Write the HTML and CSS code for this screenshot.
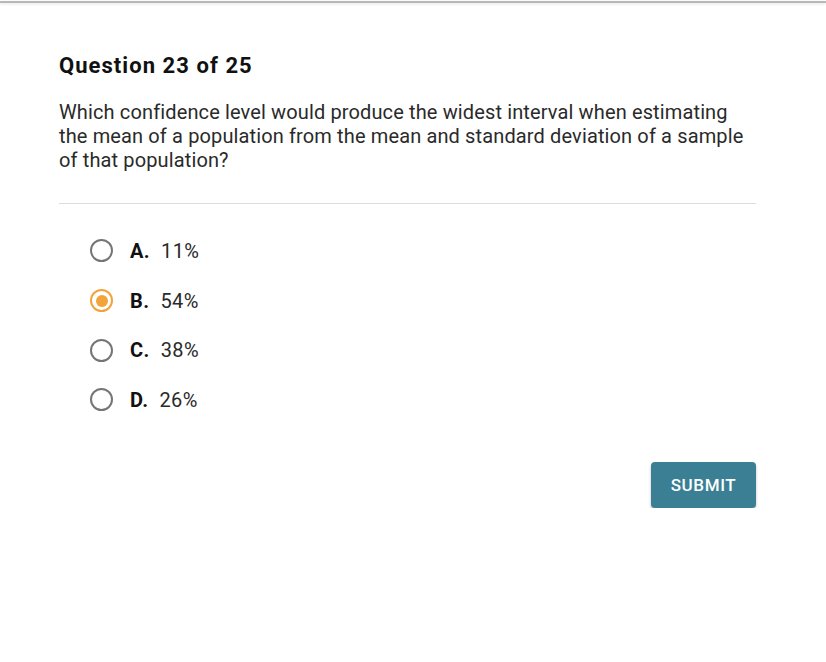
FILE: index.html
```html
<!DOCTYPE html>
<html>
<head>
<meta charset="utf-8">
<link rel="stylesheet" href="styles.css">
</head>
<body>
<div class="topbar"></div>
<main class="quiz">
  <h1 class="title">Question 23 of 25</h1>
  <p class="prompt">Which confidence level would produce the widest interval when estimating the mean of a population from the mean and standard deviation of a sample of that population?</p>
  <hr class="divider">
  <ul class="options">
    <li class="option"><span class="radio"></span><span class="letter">A.</span><span class="value">11%</span></li>
    <li class="option selected"><span class="radio"></span><span class="letter">B.</span><span class="value">54%</span></li>
    <li class="option"><span class="radio"></span><span class="letter">C.</span><span class="value">38%</span></li>
    <li class="option"><span class="radio"></span><span class="letter">D.</span><span class="value">26%</span></li>
  </ul>
  <div class="actions"><button class="submit">SUBMIT</button></div>
</main>
</body>
</html>
```
FILE: styles.css
```css
html, body {
  margin: 0;
  padding: 0;
  background: #fff;
  font-family: Roboto, "Liberation Sans", sans-serif;
  color: #1f1f1f;
}
.topbar {
  height: 2px;
  margin-top: 1px;
  background: #b8b8b8;
  box-shadow: 0 1px 3px rgba(0,0,0,0.12);
}
.quiz {
  width: 697px;
  margin-left: 59px;
  padding-top: 51px;
}
.title {
  margin: 0;
  font-size: 22px;
  line-height: 24px;
  font-weight: 700;
  color: #111;
  letter-spacing: 1.05px;
}
.prompt {
  margin: 22px 0 0;
  font-size: 20px;
  line-height: 24px;
  letter-spacing: 0.13px;
  color: #2a2a2a;
}
.divider {
  margin: 31px 0 0;
  border: 0;
  border-top: 1px solid #dcdcdc;
  height: 0;
}
.options {
  list-style: none;
  margin: 22px 0 0;
  padding: 0 0 0 31px;
}
.option {
  display: flex;
  align-items: center;
  height: 49.7px;
  font-size: 20px;
  letter-spacing: 0.4px;
}
.radio {
  box-sizing: border-box;
  width: 23px;
  height: 23px;
  border: 2px solid #757575;
  border-radius: 50%;
  display: flex;
  align-items: center;
  justify-content: center;
  margin-right: 17px;
}
.selected .radio {
  border-color: #f2a33a;
}
.selected .radio::after {
  content: "";
  width: 12px;
  height: 12px;
  border-radius: 50%;
  background: #f2a33a;
}
.letter {
  font-weight: 700;
  color: #111;
  margin-right: 11px;
}
.value {
  color: #2a2a2a;
}
.actions {
  display: flex;
  justify-content: flex-end;
  margin-top: 37px;
}
.submit {
  width: 105px;
  height: 46px;
  border: 0;
  border-radius: 4px;
  background: #3a7f94;
  color: #fff;
  font-family: Roboto, "Liberation Sans", sans-serif;
  font-size: 17px;
  font-weight: 500;
  letter-spacing: 0.6px;
  box-shadow: 0 2px 3px rgba(0,0,0,0.25);
  cursor: pointer;
}
```
